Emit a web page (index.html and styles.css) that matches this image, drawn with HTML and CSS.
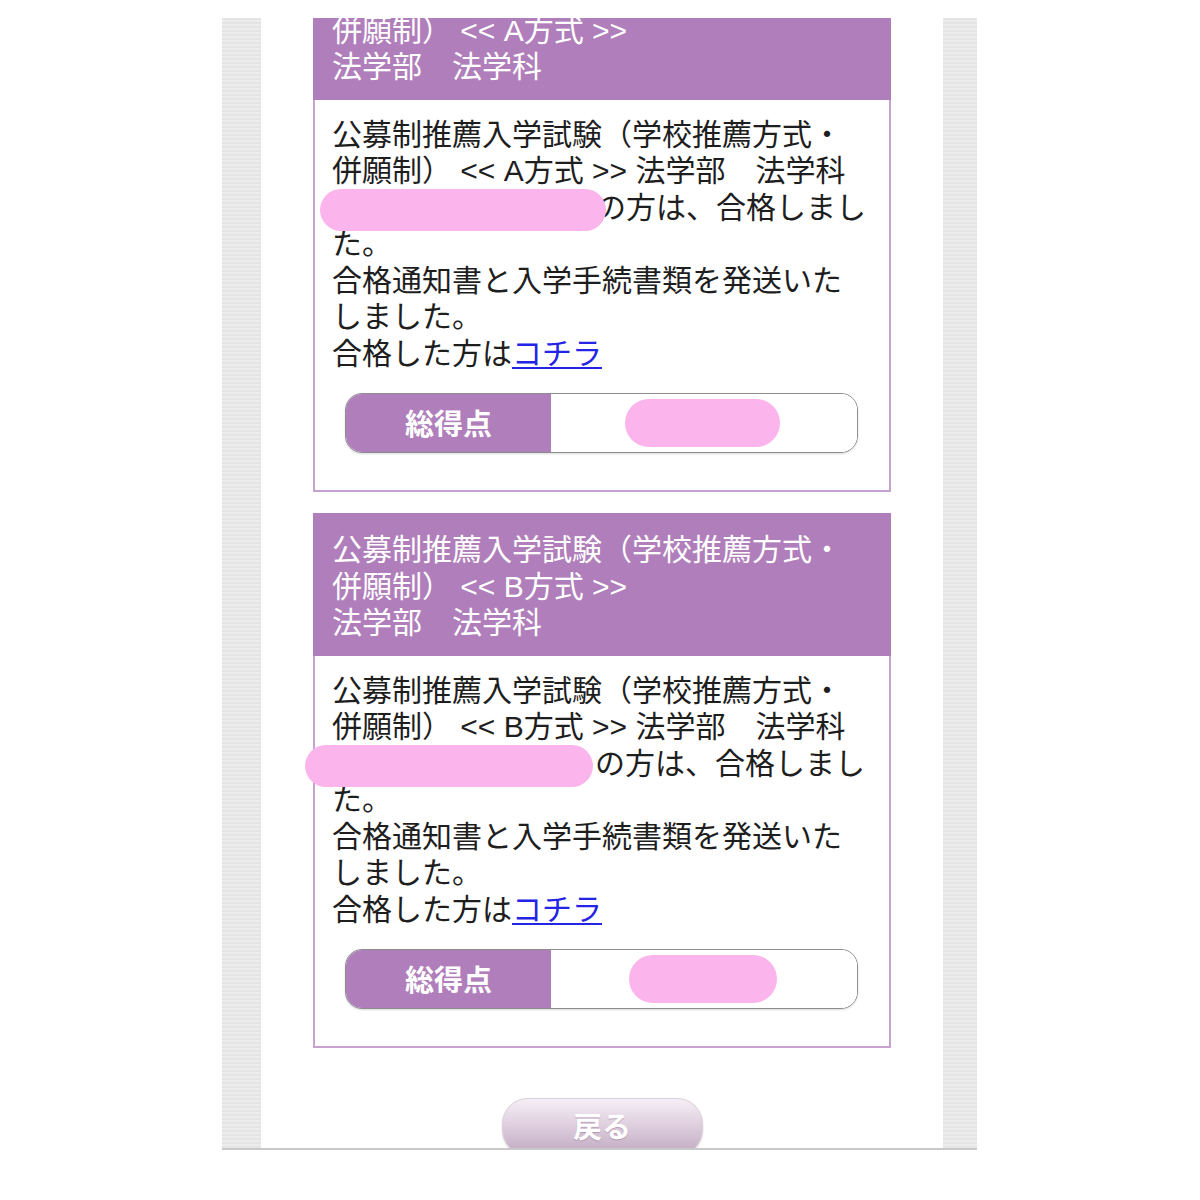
FILE: index.html
```html
<!DOCTYPE html>
<html lang="ja">
<head>
<meta charset="utf-8">
<title>合否照会</title>
<link rel="stylesheet" href="styles.css">
</head>
<body>
<div class="frame">
  <div class="stripe stripe-left"></div>
  <main class="content">
    <div class="scroll">
      <section class="card">
        <header class="card-head">公募制推薦入学試験（学校推薦方式・<br>併願制） &lt;&lt; A方式 &gt;&gt;<br>法学部　法学科</header>
        <div class="card-body">
          <p class="msg">公募制推薦入学試験（学校推薦方式・併願制） &lt;&lt; A方式 &gt;&gt; 法学部　法学科<span class="name name-a"></span>の方は、合格しました。<br>合格通知書と入学手続書類を発送いたしました。<br>合格した方は<a href="#" class="link">コチラ</a></p>
          <div class="score">
            <div class="score-label">総得点</div>
            <div class="score-value"><span class="blob blob-a"></span></div>
          </div>
        </div>
      </section>
      <section class="card">
        <header class="card-head">公募制推薦入学試験（学校推薦方式・<br>併願制） &lt;&lt; B方式 &gt;&gt;<br>法学部　法学科</header>
        <div class="card-body">
          <p class="msg">公募制推薦入学試験（学校推薦方式・併願制） &lt;&lt; B方式 &gt;&gt; 法学部　法学科<span class="name name-b"></span>の方は、合格しました。<br>合格通知書と入学手続書類を発送いたしました。<br>合格した方は<a href="#" class="link">コチラ</a></p>
          <div class="score">
            <div class="score-label">総得点</div>
            <div class="score-value"><span class="blob blob-b"></span></div>
          </div>
        </div>
      </section>
      <div class="actions">
        <button class="back" type="button">戻る</button>
      </div>
    </div>
  </main>
  <div class="stripe stripe-right"></div>
</div>
</body>
</html>
```
FILE: styles.css
```css
html, body {
  margin: 0;
  padding: 0;
  background: #ffffff;
}
body {
  font-family: "Liberation Sans", "Noto Sans CJK JP", sans-serif;
  color: #1e1e1e;
}
.frame {
  display: flex;
  width: 755px;
  height: 1130px;
  margin: 18px 0 0 222px;
  border-bottom: 2px solid #c9c9c9;
  box-shadow: 0 4px 4px -2px rgba(0,0,0,0.06);
  overflow: hidden;
}
.stripe {
  background: repeating-linear-gradient(to bottom, #e4e4e4 0, #e4e4e4 2px, #ececec 2px, #ececec 4px);
}
.stripe-left { width: 39px; }
.stripe-right { width: 34px; }
.content {
  width: 682px;
  background: #fff;
  overflow: hidden;
}
.scroll {
  margin-top: -61px;
  display: flex;
  flex-direction: column;
  align-items: center;
}
.card {
  width: 578px;
  margin-bottom: 21px;
}
.card-head {
  background: #b07fbb;
  color: #ffffff;
  font-size: 30px;
  line-height: 36.5px;
  padding: 19px 17px 14px 19px;
}
.card-body {
  border: 2px solid #c7a1cf;
  border-top: none;
  padding: 17px 22px 37px 17px;
}
.msg {
  margin: 0;
  font-size: 30px;
  line-height: 36.5px;
  color: #1e1e1e;
  width: 535px;
}
.name {
  display: inline-block;
  position: relative;
  height: 20px;
  vertical-align: middle;
}
.name::before {
  content: "";
  position: absolute;
  left: 0;
  right: 0;
  top: -11px;
  bottom: -11px;
  border-radius: 21px;
  background: #fbb4ec;
}
.name-a { margin-left: -12px; width: 286px; margin-right: -10px; }
.name-b { margin-left: -27px; width: 288px; margin-right: 2px; }
.link {
  color: #2424e6;
  text-decoration: underline;
  text-underline-offset: 3px;
  text-decoration-thickness: 2px;
}
.score {
  display: flex;
  width: 513px;
  height: 60px;
  margin: 21px 0 0 13px;
  border: 1.5px solid #8e8e8e;
  border-radius: 17px;
  overflow: hidden;
  box-sizing: border-box;
  box-shadow: 0 1px 2px rgba(0,0,0,0.15);
}
.score-label {
  width: 205px;
  background: #b07fbb;
  color: #fff;
  font-family: "Noto Sans CJK JP", sans-serif;
  font-weight: bold;
  font-size: 29px;
  display: flex;
  align-items: center;
  justify-content: center;
  padding-bottom: 2px;
  box-sizing: border-box;
}
.score-value {
  flex: 1;
  background: #fff;
  display: flex;
  align-items: center;
}
.blob {
  display: block;
  height: 48px;
  border-radius: 24px;
  background: #fbb4ec;
}
.blob-a { width: 155px; margin-left: 74px; }
.blob-b { width: 148px; margin-left: 78px; }
.actions {
  padding-top: 29px;
  display: flex;
  justify-content: center;
}
.back {
  width: 201px;
  height: 58px;
  border: 1px solid #d8cfd8;
  border-radius: 26px;
  background: linear-gradient(to bottom, #f6eef6 0%, #e2d3e2 40%, #c0a9c2 100%);
  color: #ffffff;
  font-family: "Noto Sans CJK JP", sans-serif;
  font-weight: bold;
  font-size: 29px;
  line-height: 1;
  padding: 0 0 4px;
  text-shadow: 0 1px 1px rgba(120,90,120,0.4);
  box-shadow: 0 1px 2px rgba(0,0,0,0.15);
}
```
